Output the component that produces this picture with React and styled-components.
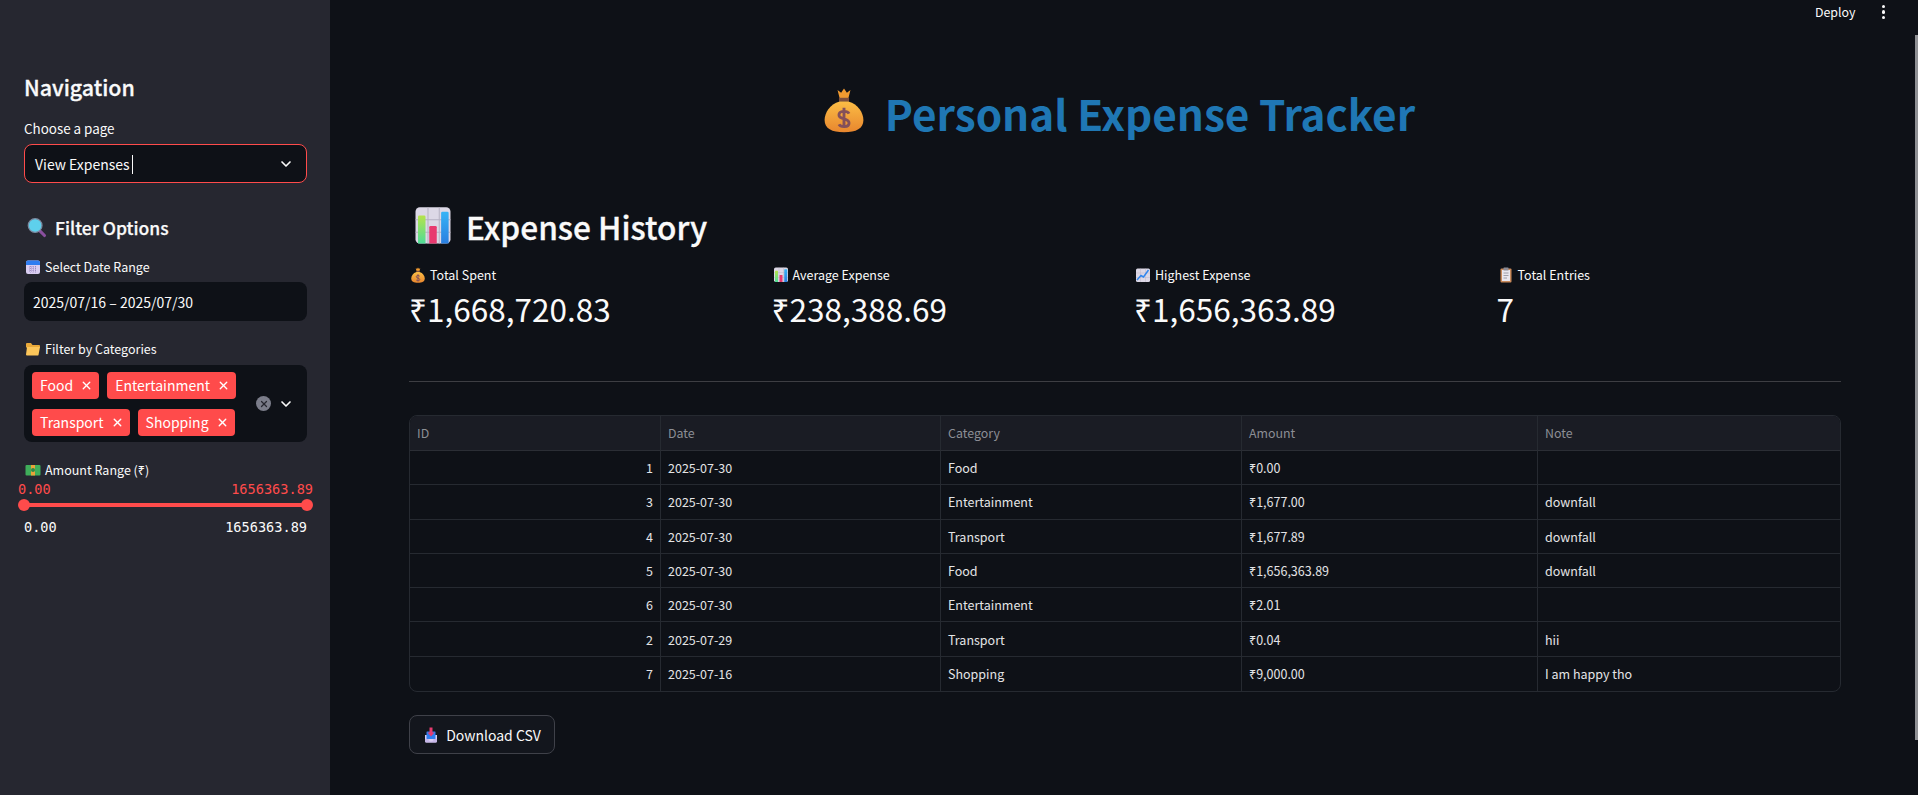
import styled, { createGlobalStyle } from "styled-components";
import { ChevronDown, X } from "lucide-react";

const GlobalStyle = createGlobalStyle`
  html, body {
    margin: 0;
    height: 100%;
    overflow: hidden;
    background: #0e1117;
  }
  * {
    box-sizing: border-box;
  }
`;

const FONT = `"Noto Sans CJK JP", "Noto Sans", sans-serif`;
const MONO = `"DejaVu Sans Mono", "Liberation Mono", monospace`;

const Page = styled.div`
  display: flex;
  height: 795px;
  font-family: ${FONT};
  color: #fafafa;
  background: #0e1117;
`;

const Sidebar = styled.aside`
  flex: 0 0 330px;
  background: #262730;
  padding: 70px 23px 0 24px;
`;

const SideTitle = styled.h2`
  margin: 0 0 14px;
  font-size: 21.4px;
  line-height: 34px;
  font-weight: 500;
  -webkit-text-stroke: 0.3px #fafafa;
`;

const FieldLabel = styled.div`
  display: flex;
  align-items: center;
  gap: 4px;
  font-size: ${(p) => p.$size || 12.5}px;
  line-height: 20px;
  height: 20px;
  color: #fafafa;
  svg {
    margin-left: 1px;
  }
`;

const Select = styled.div`
  display: flex;
  align-items: center;
  justify-content: space-between;
  height: 39px;
  margin-top: 6px;
  padding: 0 12px 0 10px;
  background: #0e1117;
  border: 1px solid #ff4b4b;
  border-radius: 8px;
  font-size: 14px;
`;

const Caret = styled.span`
  display: inline-block;
  width: 1px;
  height: 19px;
  margin-left: 2px;
  background: #fafafa;
  vertical-align: -4px;
`;

const SideHeading = styled.h3`
  display: flex;
  align-items: center;
  gap: 8px;
  margin: 29px 0 13px 3px;
  font-size: 17.5px;
  line-height: 32px;
  font-weight: 500;
  -webkit-text-stroke: 0.25px #fafafa;
`;

const DateInput = styled.div`
  display: flex;
  align-items: center;
  height: 39px;
  margin-top: 5px;
  padding-left: 9px;
  background: #0e1117;
  border-radius: 8px;
  font-size: 14px;
`;

const MultiSelect = styled.div`
  display: flex;
  align-items: center;
  justify-content: space-between;
  height: 77px;
  margin-top: 6px;
  padding: 6px 13px 6px 8px;
  background: #0e1117;
  border-radius: 8px;
`;

const TagWrap = styled.div`
  display: flex;
  flex-wrap: wrap;
  gap: 10px 8px;
  width: 215px;
`;

const Tag = styled.span`
  display: inline-flex;
  align-items: center;
  justify-content: space-between;
  gap: 7px;
  height: 27px;
  padding: 0 6px 0 8px;
  background: #ff4b4b;
  border-radius: 4px;
  font-size: 14px;
  color: #fff;
`;

const Controls = styled.div`
  display: flex;
  align-items: center;
  gap: 7px;
`;

const ClearDot = styled.span`
  display: inline-flex;
  align-items: center;
  justify-content: center;
  width: 15px;
  height: 15px;
  border-radius: 50%;
  background: #7b7d8a;
  color: #262730;
`;

const FieldGap = styled.div`
  margin-top: ${(p) => p.$top}px;
`;

const ValueRow = styled.div`
  display: flex;
  justify-content: space-between;
  font-family: ${MONO};
  font-size: 13.6px;
  line-height: 18px;
  color: ${(p) => (p.$accent ? "#ff4b4b" : "#fafafa")};
  margin: ${(p) => (p.$accent ? "0 -6px 0" : "0")};
`;

const Track = styled.div`
  position: relative;
  height: 4px;
  margin: 5px 0 11px;
  background: #ff4b4b;
  border-radius: 2px;
`;

const Thumb = styled.span`
  position: absolute;
  top: -4px;
  ${(p) => (p.$end ? "right: -6px;" : "left: -6px;")}
  width: 12px;
  height: 12px;
  border-radius: 50%;
  background: #ff4b4b;
`;

const Main = styled.main`
  flex: 1;
  min-width: 0;
  padding: 0 77px 0 79px;
`;

const Toolbar = styled.div`
  position: absolute;
  top: 0;
  right: 0;
  display: flex;
  align-items: center;
  height: 24px;
  padding-right: 33px;
  gap: 26px;
  font-size: 12.4px;
`;

const Kebab = styled.span`
  display: flex;
  flex-direction: column;
  gap: 2px;
  i {
    width: 3.500px;
    height: 3.500px;
    border-radius: 50%;
    background: #fafafa;
  }
`;

const Scrollbar = styled.div`
  position: absolute;
  top: 35px;
  right: 0;
  width: 3px;
  height: 705px;
  background: #8f9094;
`;

const Title = styled.h1`
  display: flex;
  align-items: center;
  justify-content: center;
  gap: 18px;
  margin: 0;
  padding: 83px 14px 0 0;
  height: 142px;
  font-size: 42.3px;
  line-height: 60px;
  font-weight: 700;
  color: #1f77b4;
  svg {
    margin-bottom: 5px;
  }
`;

const Heading = styled.h2`
  display: flex;
  align-items: center;
  gap: 13px;
  margin: 62px 0 0 4px;
  height: 44px;
  font-size: 31.6px;
  line-height: 44px;
  font-weight: 500;
  -webkit-text-stroke: 0.3px #fafafa;
`;

const Metrics = styled.div`
  display: grid;
  grid-template-columns: repeat(4, 362.500px);
  margin-top: 17px;
`;

const MetricLabel = styled.div`
  display: flex;
  align-items: center;
  gap: 4px;
  padding-left: 1px;
  height: 20px;
  font-size: 12.5px;
  line-height: 20px;
`;

const MetricValue = styled.div`
  height: 50px;
  margin-top: -2px;
  font-size: 31.500px;
  line-height: 50px;
  font-weight: 400;
`;

const Divider = styled.hr`
  margin: 48px 0 33px;
  border: 0;
  border-top: 1px solid #3d3e43;
`;

const Grid = styled.div`
  display: grid;
  grid-template-columns: 251px 280px 301px 296px 1fr;
  border: 1px solid #262a31;
  border-radius: 8px;
  overflow: hidden;
  height: 277px;
  grid-template-rows: 35px repeat(7, 1fr);
`;

const HeadCell = styled.div`
  display: flex;
  align-items: center;
  padding-left: 7px;
  background: #1a1c24;
  color: #8c8e95;
  font-size: 12.4px;
  border-bottom: 1px solid #2b2e35;
  border-right: ${(p) => (p.$last ? "0" : "1px solid #262a31")};
`;

const Cell = styled.div`
  display: flex;
  align-items: center;
  justify-content: ${(p) => (p.$right ? "flex-end" : "flex-start")};
  padding: 0 7px;
  font-size: 12.5px;
  color: #e4e4e6;
  border-bottom: ${(p) => (p.$bottom ? "0" : "1px solid #262a31")};
  border-right: ${(p) => (p.$last ? "0" : "1px solid #262a31")};
`;

const DownloadButton = styled.button`
  display: inline-flex;
  align-items: center;
  justify-content: center;
  gap: 7px;
  width: 146px;
  height: 39px;
  margin-top: 23px;
  background: #13161d;
  border: 1px solid #3f4149;
  border-radius: 8px;
  color: #fafafa;
  font-family: ${FONT};
  font-size: 14px;
`;

const EmojiBox = styled.svg`
  flex: none;
  display: block;
`;

const Emoji = ({ kind, size = 16 }) => (
  <EmojiBox width={size} height={size} viewBox="0 0 32 32">
    <defs>
      <linearGradient id="bagFill" x1="0" y1="0" x2="0" y2="1">
        <stop offset="0" stopColor="#fbbd45" />
        <stop offset="1" stopColor="#e8862e" />
      </linearGradient>
      <linearGradient id="limeBar" x1="0" y1="0" x2="0" y2="1">
        <stop offset="0" stopColor="#b6e34a" />
        <stop offset="1" stopColor="#4fdc98" />
      </linearGradient>
      <linearGradient id="blueBar" x1="0" y1="0" x2="0" y2="1">
        <stop offset="0" stopColor="#35b4f6" />
        <stop offset="1" stopColor="#2a7fe0" />
      </linearGradient>
    </defs>
    {kind === "bag" && (
      <>
        <path d="M11.500 2l2.500 2 2-3 2 3 2.500-2-1.500 6h-6z" fill="#f09a30" />
        <rect x="12.500" y="7.500" width="7" height="2.800" fill="#7d4f3e" />
        <path
          d="M13 10h6C26 12 29.500 18 29.500 23c0 6-5 8.500-13.500 8.500S2.500 29 2.500 23c0-5 3.500-11 10.500-13z"
          fill="url(#bagFill)"
        />
        <path
          d="M16 14.500v14M19.500 18.500c-1-2-7-2.500-7 1 0 3.500 7 2 7 5.500 0 3.500-6 3-7 1"
          fill="none"
          stroke="#84505a"
          strokeWidth="2"
        />
      </>
    )}
    {kind === "bars" && (
      <>
        <rect x="2" y="1" width="28" height="29" rx="3.500" fill="#dcd8e6" />
        <path d="M2 11h28M2 21h28M12 1v29M21 1v29" stroke="#b5b1c2" strokeWidth="0.800" />
        <path d="M4 8.500a1 1 0 0 1 1-1h4a1 1 0 0 1 1 1V30H4z" fill="url(#limeBar)" />
        <path d="M13 17a1 1 0 0 1 1-1h4a1 1 0 0 1 1 1v13h-6z" fill="#e8396f" />
        <path d="M22.500 5.500a1 1 0 0 1 1-1h4a1 1 0 0 1 1 1V30h-6z" fill="url(#blueBar)" />
      </>
    )}
    {kind === "trend" && (
      <>
        <rect x="2" y="3" width="28" height="27" rx="3" fill="#dcd8e6" />
        <path d="M2 12h28M2 21h28M11 3v27M21 3v27" stroke="#b5b1c2" strokeWidth="0.800" />
        <path d="M4 26l8-9 5 3 10-14" fill="none" stroke="#2f86ee" strokeWidth="3" />
      </>
    )}
    {kind === "clip" && (
      <>
        <rect x="5" y="3" width="22" height="28" rx="2" fill="#c98a5b" />
        <rect x="8" y="6" width="16" height="22" fill="#e9e6ee" />
        <rect x="11" y="1" width="10" height="6" rx="1" fill="#8b8b96" />
        <path d="M11 12h10M11 17h10M11 22h7" stroke="#8b8b96" strokeWidth="1.600" />
      </>
    )}
    {kind === "search" && (
      <>
        <path d="M19 19l9 9" stroke="#8a4f9e" strokeWidth="5" strokeLinecap="round" />
        <circle cx="13" cy="12" r="11" fill="#5ed0ec" stroke="#7c8aa0" strokeWidth="2" />
      </>
    )}
    {kind === "calendar" && (
      <>
        <rect x="2" y="3" width="28" height="27" rx="4" fill="#d9cdf0" />
        <path d="M2 12V7a4 4 0 0 1 4-4h20a4 4 0 0 1 4 4v5z" fill="#2f7df0" />
        <path
          d="M8 16h16M8 20h16M8 24h16M11 14v13M16 14v13M21 14v13"
          stroke="#8f7bb8"
          strokeWidth="1.500"
          strokeDasharray="2 2"
        />
      </>
    )}
    {kind === "folder" && (
      <>
        <path d="M2 6a2 2 0 0 1 2-2h8l3 4h13a2 2 0 0 1 2 2v3H2z" fill="#e9a93a" />
        <path d="M4 12h26l-3 16a2 2 0 0 1-2 1H4a2 2 0 0 1-2-2z" fill="#fcc65a" />
      </>
    )}
    {kind === "money" && (
      <>
        <rect x="1" y="6" width="30" height="21" rx="2" fill="#3fae5a" />
        <rect x="12" y="6" width="8" height="21" fill="#e8a33a" />
        <circle cx="16" cy="16" r="4" fill="#2e8a47" />
      </>
    )}
    {kind === "inbox" && (
      <>
        <path d="M4 16h24v12a3 3 0 0 1-3 3H7a3 3 0 0 1-3-3z" fill="#d9cdf0" />
        <rect x="7" y="9" width="18" height="15" rx="1" fill="#2f7df0" />
        <path d="M13 1h6v10h4l-7 8-7-8h4z" fill="#e63b6f" />
        <path d="M4 24h7a5 5 0 0 0 10 0h7v4a3 3 0 0 1-3 3H7a3 3 0 0 1-3-3z" fill="#c6b6e8" />
      </>
    )}
  </EmojiBox>
);

const TAGS = ["Food", "Entertainment", "Transport", "Shopping"];

const METRICS = [
  { icon: "bag", label: "Total Spent", value: "₹1,668,720.83" },
  { icon: "bars", label: "Average Expense", value: "₹238,388.69" },
  { icon: "trend", label: "Highest Expense", value: "₹1,656,363.89" },
  { icon: "clip", label: "Total Entries", value: "7" },
];

const COLUMNS = ["ID", "Date", "Category", "Amount", "Note"];

const ROWS = [
  [1, "2025-07-30", "Food", "₹0.00", ""],
  [3, "2025-07-30", "Entertainment", "₹1,677.00", "downfall"],
  [4, "2025-07-30", "Transport", "₹1,677.89", "downfall"],
  [5, "2025-07-30", "Food", "₹1,656,363.89", "downfall"],
  [6, "2025-07-30", "Entertainment", "₹2.01", ""],
  [2, "2025-07-29", "Transport", "₹0.04", "hii"],
  [7, "2025-07-16", "Shopping", "₹9,000.00", "I am happy tho"],
];

const App = () => {
  return (
    <Page>
      <GlobalStyle />
      <Sidebar>
        <SideTitle>Navigation</SideTitle>
        <FieldLabel $size={13.4}>Choose a page</FieldLabel>
        <Select>
          <span>
            View Expenses
            <Caret />
          </span>
          <ChevronDown size={16} strokeWidth={2.5} />
        </Select>

        <SideHeading>
          <Emoji kind="search" size={20} />
          Filter Options
        </SideHeading>
        <FieldLabel>
          <Emoji kind="calendar" />
          Select Date Range
        </FieldLabel>
        <DateInput>2025/07/16 – 2025/07/30</DateInput>

        <FieldGap $top={18}>
          <FieldLabel>
            <Emoji kind="folder" />
            Filter by Categories
          </FieldLabel>
          <MultiSelect>
            <TagWrap>
              {TAGS.map((tag) => (
                <Tag key={tag}>
                  {tag}
                  <X size={13} strokeWidth={2.5} />
                </Tag>
              ))}
            </TagWrap>
            <Controls>
              <ClearDot>
                <X size={10} strokeWidth={3} />
              </ClearDot>
              <ChevronDown size={16} strokeWidth={2.5} />
            </Controls>
          </MultiSelect>
        </FieldGap>

        <FieldGap $top={18}>
          <FieldLabel>
            <Emoji kind="money" />
            Amount Range (₹)
          </FieldLabel>
          <ValueRow $accent>
            <span>0.00</span>
            <span>1656363.89</span>
          </ValueRow>
          <Track>
            <Thumb />
            <Thumb $end />
          </Track>
          <ValueRow>
            <span>0.00</span>
            <span>1656363.89</span>
          </ValueRow>
        </FieldGap>
      </Sidebar>

      <Main>
        <Toolbar>
          Deploy
          <Kebab>
            <i />
            <i />
            <i />
          </Kebab>
        </Toolbar>
        <Scrollbar />

        <Title>
          <Emoji kind="bag" size={46} />
          Personal Expense Tracker
        </Title>
        <Heading>
          <Emoji kind="bars" size={40} />
          Expense History
        </Heading>

        <Metrics>
          {METRICS.map((m) => (
            <div key={m.label}>
              <MetricLabel>
                <Emoji kind={m.icon} />
                {m.label}
              </MetricLabel>
              <MetricValue>{m.value}</MetricValue>
            </div>
          ))}
        </Metrics>

        <Divider />

        <Grid>
          {COLUMNS.map((col, i) => (
            <HeadCell key={col} $last={i === COLUMNS.length - 1}>
              {col}
            </HeadCell>
          ))}
          {ROWS.map((row, r) =>
            row.map((val, c) => (
              <Cell
                key={`${r}-${c}`}
                $right={c === 0}
                $last={c === row.length - 1}
                $bottom={r === ROWS.length - 1}
              >
                {val}
              </Cell>
            ))
          )}
        </Grid>

        <DownloadButton>
          <Emoji kind="inbox" />
          Download CSV
        </DownloadButton>
      </Main>
    </Page>
  );
};

export default App;
